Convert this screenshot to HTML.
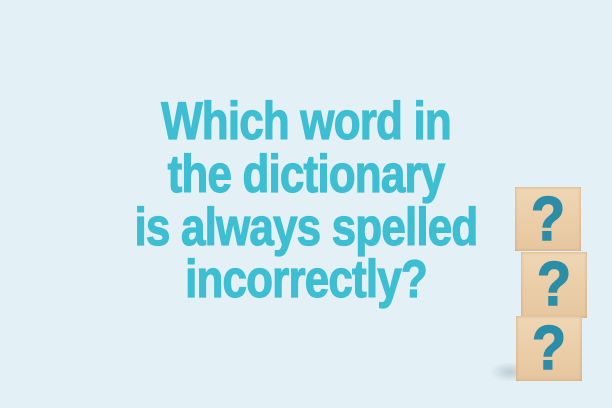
<!DOCTYPE html>
<html><head><style>
html,body{margin:0;padding:0}
body{width:612px;height:408px;background:#e3f0f6;position:relative;overflow:hidden;font-family:"Liberation Sans",sans-serif}
.l{position:absolute;left:0;width:612px;text-align:center;color:#3dbed2;font-weight:bold;font-size:53px;line-height:53px;letter-spacing:-1px;transform:scaleX(0.83);transform-origin:306px 0;white-space:nowrap;-webkit-text-stroke:1.2px #3dbed2}
.b{position:absolute;background:linear-gradient(180deg,#f0d6b4,#e6c69e);box-shadow:inset 0 0 3px rgba(150,110,60,.4)}
.q{position:absolute;left:0;right:0;text-align:center;color:#2b8da6;font-weight:bold;font-size:62px;line-height:62px;top:2px;-webkit-text-stroke:1.5px #2b8da6;transform:scaleX(0.9)}
</style></head><body>
<div class="l" style="top:95px">Which word in</div>
<div class="l" style="top:148px">the dictionary</div>
<div class="l" style="top:201px">is always spelled</div>
<div class="l" style="top:253px">incorrectly?</div>
<div style="position:absolute;left:490px;top:362px;width:40px;height:20px;background:radial-gradient(ellipse,rgba(150,170,180,.5),transparent 70%)"></div>
<div class="b" style="left:515px;top:187px;width:66px;height:64px"><div class="q">?</div></div>
<div class="b" style="left:521px;top:252px;width:66px;height:66px"><div class="q">?</div></div>
<div class="b" style="left:516px;top:316px;width:66px;height:65px"><div class="q">?</div></div>
</body></html>
